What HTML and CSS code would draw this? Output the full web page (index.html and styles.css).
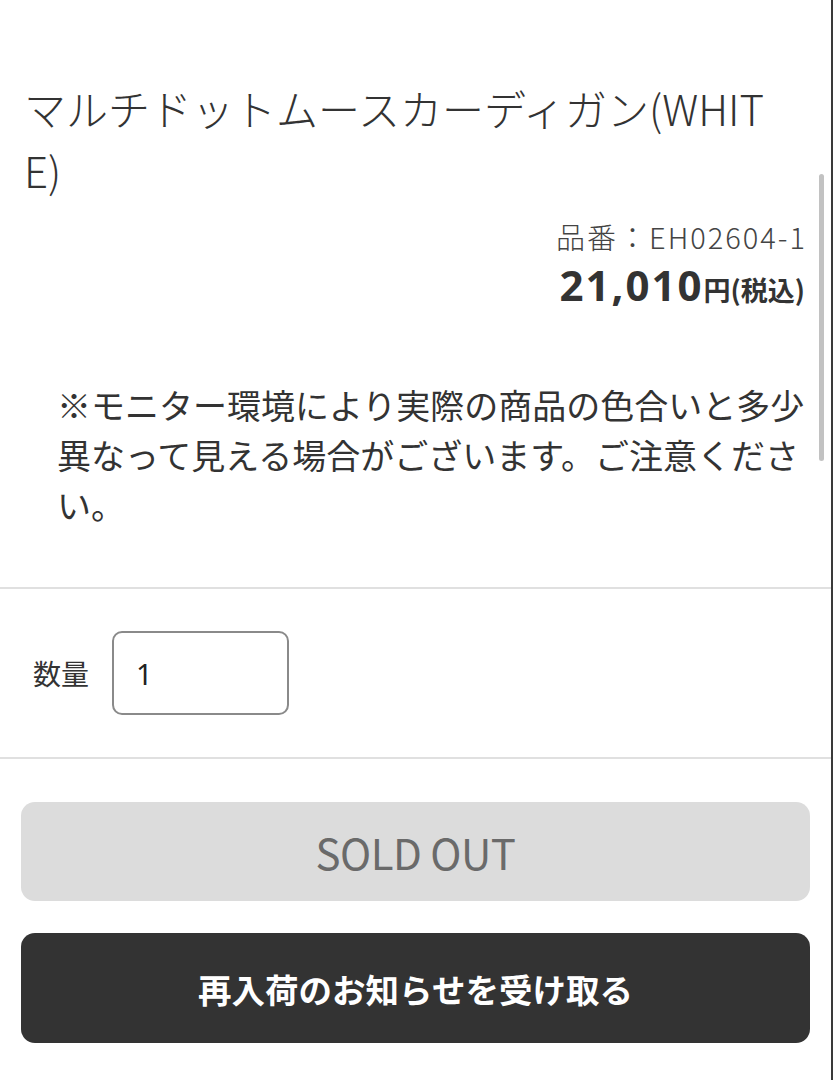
FILE: index.html
```html
<!DOCTYPE html>
<html lang="ja">
<head>
<meta charset="utf-8">
<title>マルチドットムースカーディガン(WHITE)</title>
<link rel="stylesheet" href="styles.css">
</head>
<body>
<div class="page">
  <header class="product-head">
    <h1 class="title">マルチドットムースカーディガン(WHITE)</h1>
    <div class="meta">
      <p class="code">品番：EH02604-1</p>
      <p class="price"><span class="num">21,010</span><span class="yen">円(税込)</span></p>
    </div>
  </header>
  <p class="note">※モニター環境により実際の商品の色合いと多少異なって見える場合がございます。ご注意ください。</p>
  <div class="qty-row">
    <label class="qty-label" for="qty">数量</label>
    <input class="qty-input" id="qty" type="text" value="1">
  </div>
  <div class="actions">
    <button class="btn btn-soldout" type="button">SOLD OUT</button>
    <button class="btn btn-notify" type="button">再入荷のお知らせを受け取る</button>
  </div>
  <div class="scroll-thumb"></div>
</div>
</body>
</html>
```
FILE: styles.css
```css
* { box-sizing: border-box; }
html, body { margin: 0; padding: 0; background: #fff; }
body {
  font-family: "Noto Sans CJK JP", "Noto Sans", sans-serif;
  color: #333;
}
.page {
  position: relative;
  width: 833px;
  min-height: 1080px;
  border-right: 2px solid #3a3a3a;
  overflow: hidden;
}
.product-head {
  padding: 77px 26px 0 24px;
}
.title {
  margin: 0;
  font-size: 42px;
  font-weight: 300;
  line-height: 62px;
  color: #333;
  word-break: break-all;
  padding-right: 12px;
}
.meta {
  text-align: right;
  margin-top: 12px;
}
.code {
  margin: 0 -2px 0 0;
  font-size: 29px;
  letter-spacing: 2px;
  line-height: 46px;
  color: #444;
  font-weight: 300;
}
.price {
  margin: 0;
  font-weight: 700;
  line-height: 52px;
  color: #333;
}
.price .num {
  font-family: "Noto Sans", "Noto Sans CJK JP", sans-serif;
  font-size: 42px;
  letter-spacing: 2px;
}
.price .yen { font-size: 27px; }
.note {
  margin: 60px 24px 0 57px;
  font-size: 34px;
  line-height: 50px;
  color: #333;
}
.qty-row {
  margin-top: 57px;
  border-top: 2px solid #e0e0e0;
  border-bottom: 2px solid #e0e0e0;
  display: flex;
  align-items: center;
  gap: 23px;
  padding: 42px 33px 42px;
}
.qty-label {
  font-size: 28px;
  color: #333;
}
.qty-input {
  width: 177px;
  height: 84px;
  border: 2px solid #8a8a8a;
  border-radius: 10px;
  padding: 0 22px;
  font-family: "Noto Sans", sans-serif;
  font-size: 29px;
  color: #222;
  background: #fff;
  outline: none;
}
.actions {
  padding: 43px 21px 0;
  display: flex;
  flex-direction: column;
  gap: 32px;
}
.btn {
  width: 100%;
  border: 0;
  border-radius: 14px;
  font-family: "Noto Sans CJK JP", "Noto Sans", sans-serif;
  cursor: pointer;
}
.btn-soldout {
  height: 99px;
  background: #dcdcdc;
  color: #6a6a6a;
  font-size: 42px;
  letter-spacing: -0.5px;
  font-weight: 400;
}
.btn-notify {
  height: 110px;
  background: #333;
  color: #fff;
  font-size: 33.5px;
  font-weight: 700;
}
.scroll-thumb {
  position: absolute;
  left: 819px;
  top: 174px;
  width: 5px;
  height: 287px;
  border-radius: 3px;
  background: #c2c2c2;
}
```
